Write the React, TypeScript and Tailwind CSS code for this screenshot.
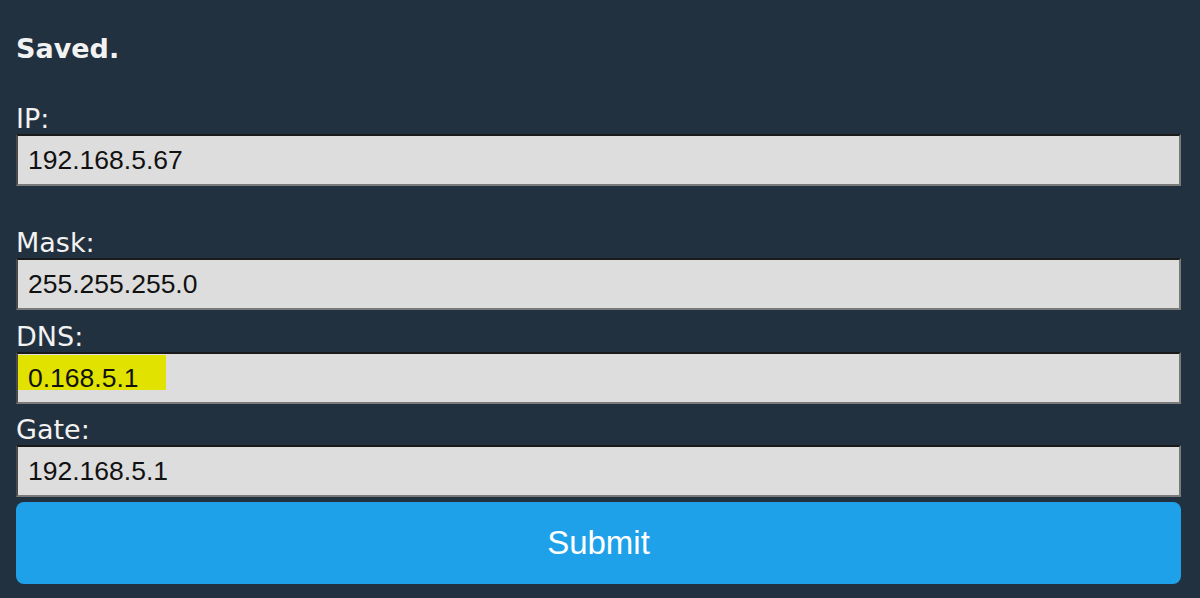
import React from "react";

const fields = [
  { key: "ip", label: "IP:", value: "192.168.5.67", gap: "mt-[42px]" },
  { key: "mask", label: "Mask:", value: "255.255.255.0", gap: "mt-[42px]" },
  { key: "dns", label: "DNS:", value: "0.168.5.1", gap: "mt-[12px]", marked: true },
  { key: "gate", label: "Gate:", value: "192.168.5.1", gap: "mt-[11px]" },
];

const labelFont = { fontFamily: '"DejaVu Sans", Verdana, sans-serif' };
const inputFont = { fontFamily: '"Liberation Sans", Arial, sans-serif' };

export default function App() {
  return (
    <div className="min-h-[598px] w-[1200px] bg-[#22313f] pl-4 pt-[36px]">
      <div className="w-[1165px]">
        <h2 className="text-[27px] font-bold leading-[26px] text-[#f2f2f2]" style={labelFont}>
          Saved.
        </h2>

        <form onSubmit={(e) => e.preventDefault()}>
          {fields.map((f) => (
            <div key={f.key} className={f.gap}>
              <label
                htmlFor={f.key}
                className="block h-[30px] text-[27px] leading-[30px] text-[#f2f2f2]"
                style={labelFont}
              >
                {f.label}
              </label>
              <div className="relative h-[52px] border-2 border-t-[#1a1a1a] border-l-[#4a4a4a] border-r-[#7a7a7a] border-b-[#7a7a7a] bg-[#dddddd]">
                {f.marked && (
                  <div className="absolute left-0 top-[1px] h-[35px] w-[148px] bg-[#e2e200]" />
                )}
                <input
                  id={f.key}
                  readOnly
                  value={f.value}
                  className="relative h-full w-full bg-transparent px-[10px] text-[26.5px] text-[#111] outline-none"
                  style={inputFont}
                />
              </div>
            </div>
          ))}

          <button
            type="submit"
            className="mt-[5px] flex h-[82px] w-full items-center justify-center rounded-lg bg-[#1fa1e9] text-[33px] text-white"
            style={inputFont}
          >
            Submit
          </button>
        </form>
      </div>
    </div>
  );
}
